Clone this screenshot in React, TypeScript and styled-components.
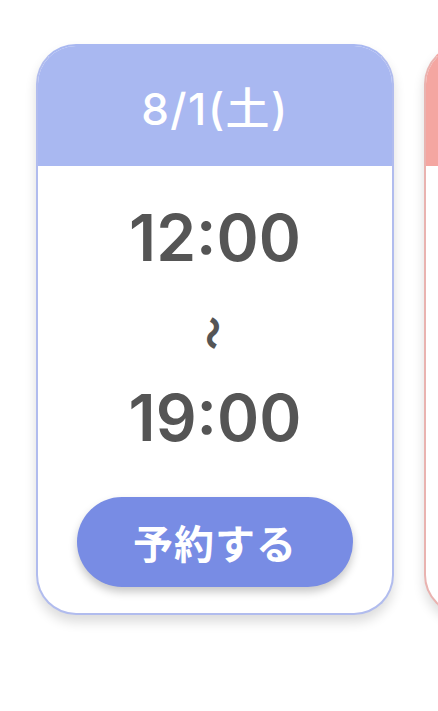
import React from 'react';
import styled, { createGlobalStyle } from 'styled-components';

const GlobalStyle = createGlobalStyle`
  html, body {
    margin: 0;
    padding: 0;
    background: #ffffff;
  }
  body {
    font-family: Inter, "Noto Sans CJK JP", "Noto Sans", sans-serif;
  }
`;

type Tone = 'blue' | 'pink';

const tones = {
  blue: { head: '#a9b8f1', border: '#b1bcee', button: '#788ce4' },
  pink: { head: '#f4a6a1', border: '#e9b3b0', button: '#ee8d86' },
};

const Strip = styled.div`
  display: flex;
  flex-direction: row;
  gap: 30px;
  padding: 44px 0 0 36px;
  width: 438px;
  height: 711px;
  box-sizing: border-box;
  overflow: hidden;
`;

const Card = styled.div<{ $tone: Tone }>`
  flex-shrink: 0;
  width: 358px;
  box-sizing: border-box;
  border: 2px solid ${(p) => tones[p.$tone].border};
  border-top-color: ${(p) => tones[p.$tone].head};
  border-radius: 40px;
  background: #ffffff;
  overflow: hidden;
  box-shadow: 0 7px 12px rgba(0, 0, 0, 0.14);
  align-self: flex-start;
`;

const Header = styled.div<{ $tone: Tone }>`
  height: 120px;
  background: ${(p) => tones[p.$tone].head};
  display: flex;
  align-items: center;
  justify-content: center;
  color: #ffffff;
  font-size: 44px;
  font-weight: 500;
  letter-spacing: 1.5px;
`;

const Body = styled.div`
  display: flex;
  flex-direction: column;
  align-items: center;
  padding: 39px 0 26px;
`;

const Time = styled.div`
  font-size: 64px;
  line-height: 66px;
  font-weight: 600;
  color: #555555;
`;

const Tilde = styled.div`
  height: 114px;
  display: flex;
  align-items: center;
  justify-content: center;
  font-family: "Noto Sans CJK JP", sans-serif;
  font-size: 34px;
  font-weight: 900;
  color: #555555;
  transform: translateY(5px) rotate(90deg);
`;

const ReserveButton = styled.button<{ $tone: Tone }>`
  margin-top: 46px;
  width: 276px;
  height: 90px;
  border: none;
  border-radius: 45px;
  background: ${(p) => tones[p.$tone].button};
  color: #ffffff;
  font-family: "Noto Sans CJK JP", sans-serif;
  font-size: 40px;
  font-weight: 700;
  letter-spacing: 1px;
  box-shadow: 0 5px 8px rgba(0, 0, 0, 0.22);
  cursor: pointer;
  padding: 0;
`;

const slots: { date: string; from: string; to: string; tone: Tone }[] = [
  { date: '8/1(土)', from: '12:00', to: '19:00', tone: 'blue' },
  { date: '8/2(日)', from: '12:00', to: '19:00', tone: 'pink' },
];

export default function App() {
  return (
    <>
      <GlobalStyle />
      <Strip>
        {slots.map((s) => (
          <Card key={s.date} $tone={s.tone}>
            <Header $tone={s.tone}>{s.date}</Header>
            <Body>
              <Time>{s.from}</Time>
              <Tilde>〜</Tilde>
              <Time>{s.to}</Time>
              <ReserveButton $tone={s.tone}>予約する</ReserveButton>
            </Body>
          </Card>
        ))}
      </Strip>
    </>
  );
}
